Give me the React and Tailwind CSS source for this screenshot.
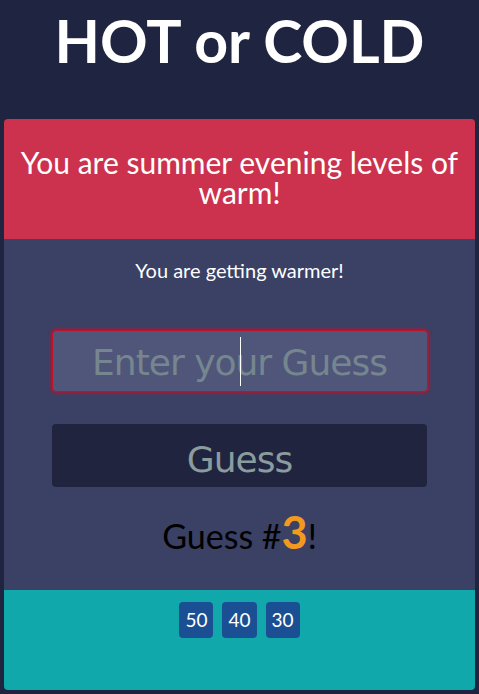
import React from 'react'

const guesses = [50, 40, 30]

export default function App() {
  return (
    <div className="min-h-[694px] w-full bg-[#1f2540] pb-1 px-1" style={{ fontFamily: 'Lato, "Open Sans", sans-serif' }}>
      <h1 className="pt-[9px] h-[119px] text-center text-[59px] font-bold leading-[64px] text-white">HOT or COLD</h1>

      <div className="flex flex-col overflow-hidden rounded-[4px]">
        <div className="flex h-[120px] items-center justify-center bg-[#cc324d] px-4 pb-1 text-center text-[30px] leading-[30px] text-white">
          You are summer evening levels of warm!
        </div>

        <div className="flex h-[351px] flex-col items-center bg-[#3a4165]">
          <p className="mt-[19px] text-[20px] leading-[24px] text-white">You are getting warmer!</p>

          <div className="relative mt-[48px] flex h-[62px] w-[376px] items-center justify-center rounded-[4px] border border-[#c0102a] bg-[#4f567a] shadow-[0_0_3px_1px_#c0102a]">
            <span className="pt-1 text-[36px] text-[#76868f]" style={{ fontFamily: '"DejaVu Sans", Verdana, sans-serif', letterSpacing: '-1px' }}>
              Enter your Guess
            </span>
            <span className="absolute left-1/2 top-[6px] h-[49px] w-px bg-white" />
          </div>

          <button className="mt-[32px] h-[63px] w-[375px] rounded-[4px] bg-[#20243f] pt-2 text-[36px] text-[#8a9c9e]" style={{ fontFamily: '"DejaVu Sans", Verdana, sans-serif', letterSpacing: '-1px' }}>
            Guess
          </button>

          <p className="mt-[22px] text-[34px] leading-[46px] text-black">
            Guess #<span className="text-[45px] font-bold text-[#f39a1e]">3</span>!
          </p>
        </div>

        <div className="flex h-[100px] justify-center gap-[9px] bg-[#10a8ab] pt-3">
          {guesses.map((g) => (
            <span key={g} className="flex h-9 items-center justify-center rounded-[4px] bg-[#1b4f93] px-[6px] text-[19px] text-white">
              {g}
            </span>
          ))}
        </div>
      </div>
    </div>
  )
}
